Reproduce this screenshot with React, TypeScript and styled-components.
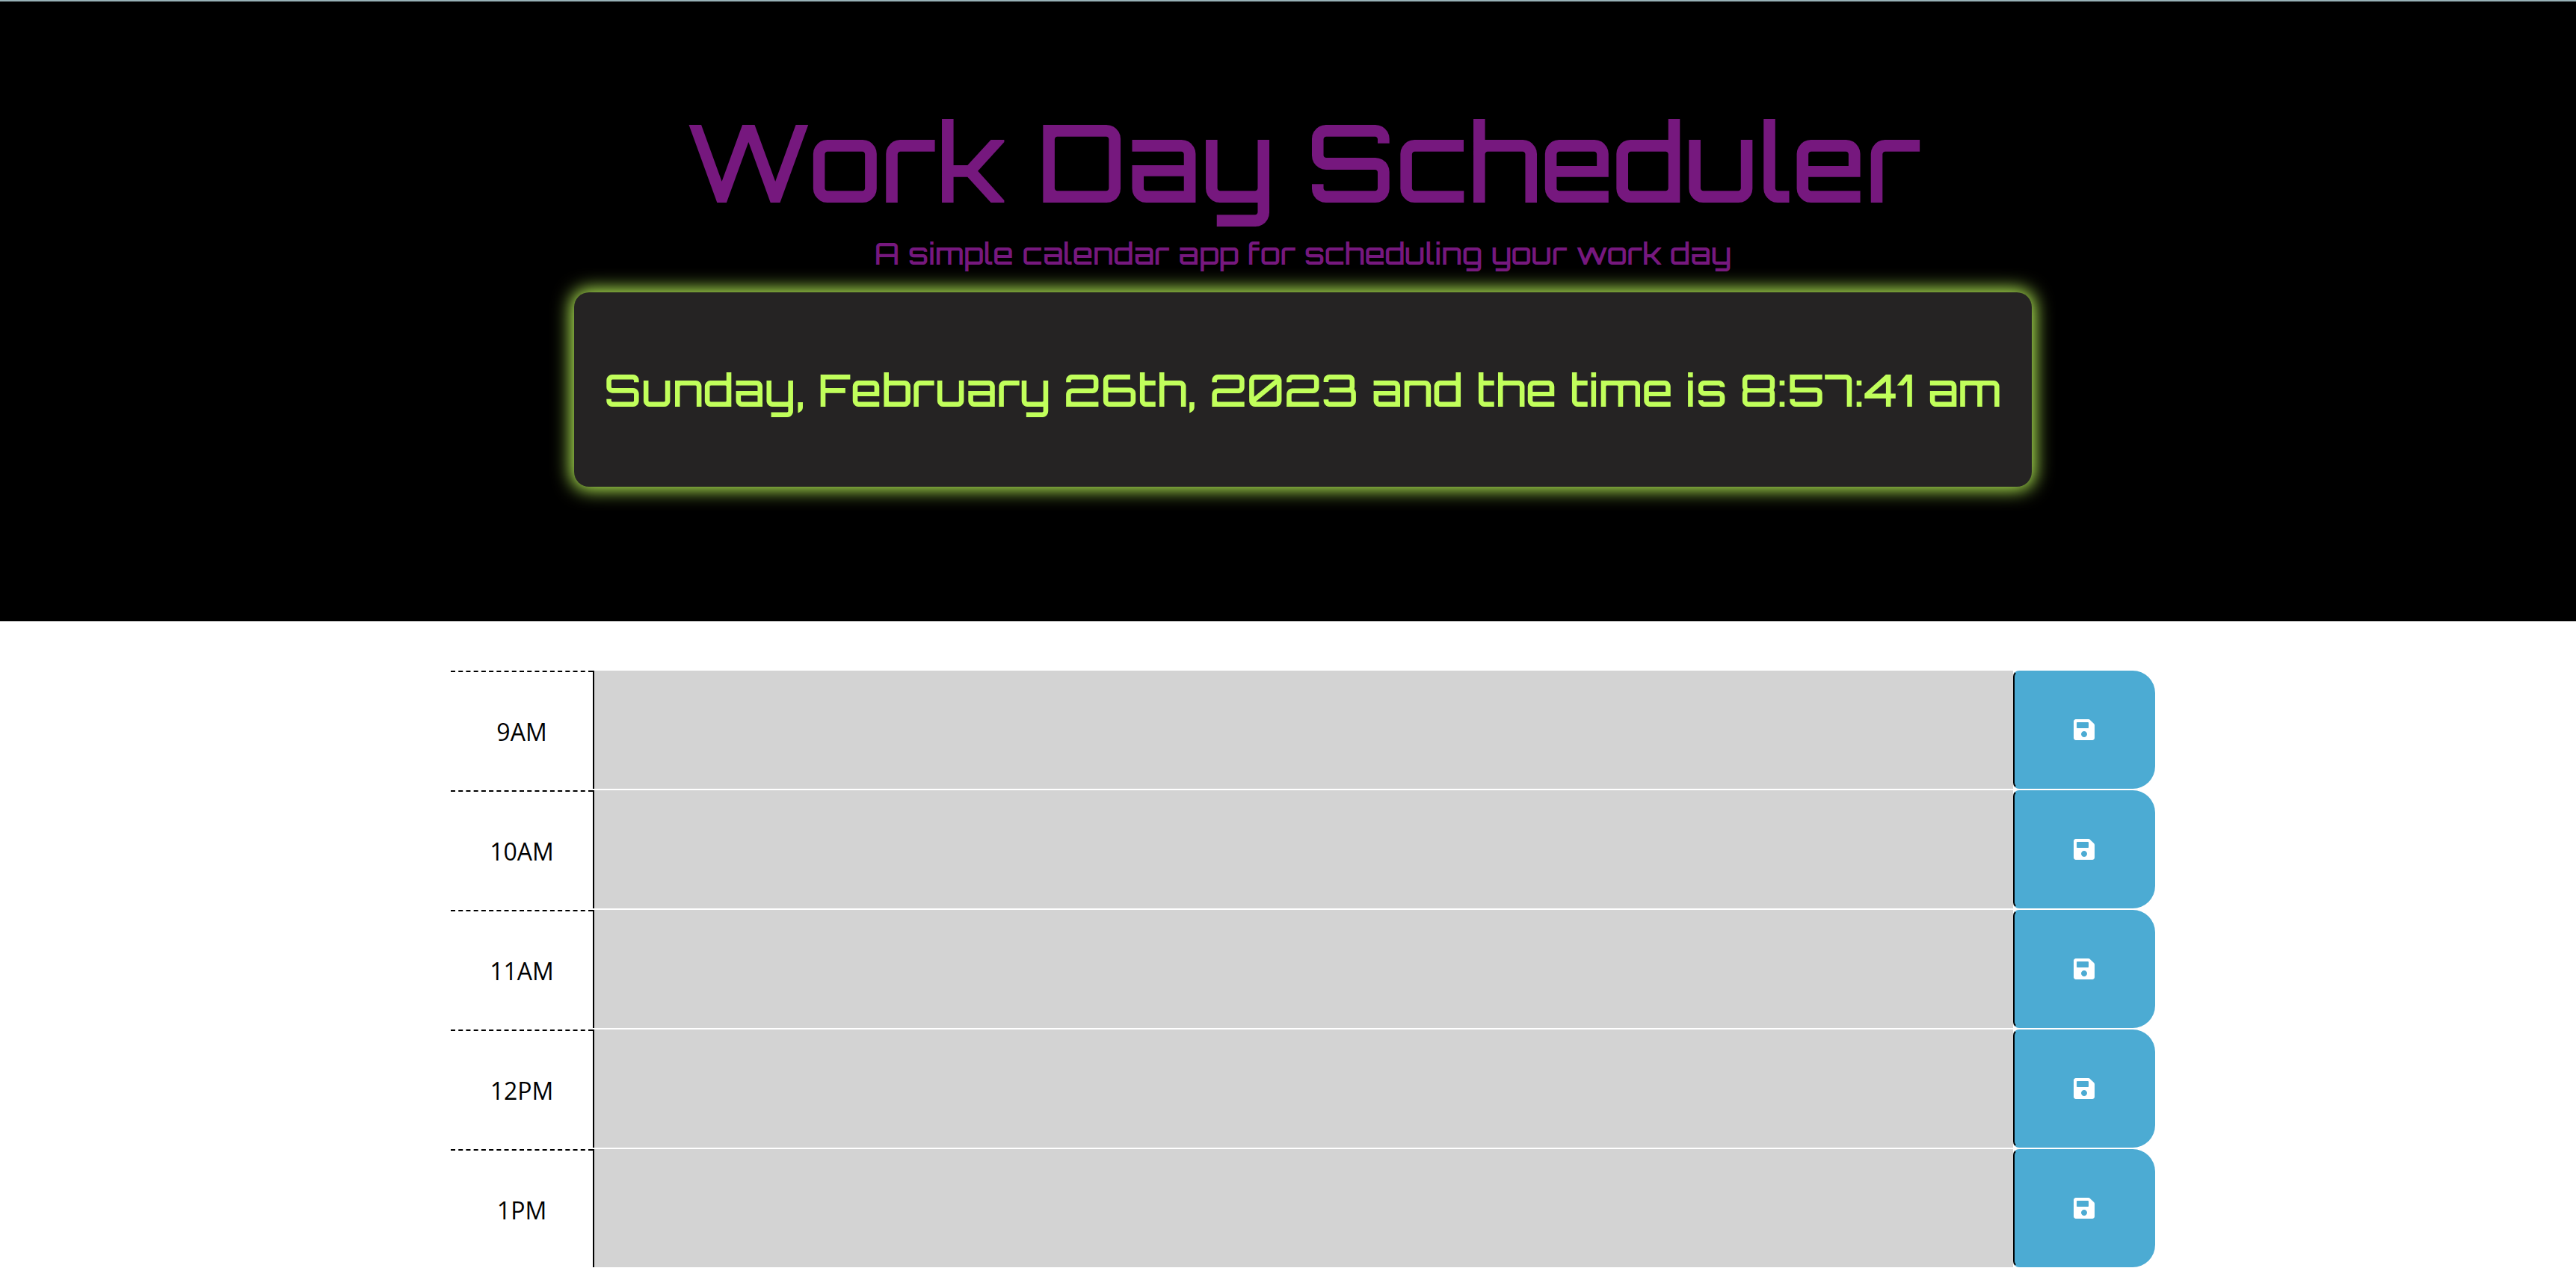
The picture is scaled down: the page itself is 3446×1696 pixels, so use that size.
import React from "react";
import styled, { createGlobalStyle } from "styled-components";
import { FaSave } from "react-icons/fa";

const GlobalStyle = createGlobalStyle`
  *, *::before, *::after { box-sizing: border-box; }
  body {
    margin: 0;
    background: #fff;
    color: #000;
    font-family: "Open Sans", "Noto Sans", sans-serif;
    font-size: 32px;
    line-height: 48px;
  }
`;

const Header = styled.header`
  display: flex;
  flex-direction: column;
  align-items: center;
  padding: 129px 0 180px 40px;
  border-top: 2px solid #97b1b7;
  background: #000;
  color: #76187e;
  font-family: Orbitron, "DejaVu Sans", sans-serif;
  font-weight: 500;
  text-align: center;
  white-space: nowrap;
`;

const Title = styled.h1`
  margin: 0;
  font-size: 144px;
  font-weight: 500;
  line-height: 170px;
`;

const Lead = styled.p`
  margin: 0 0 14px;
  font-size: 40px;
  line-height: 76px;
`;

const Clock = styled.p`
  display: flex;
  align-items: center;
  justify-content: center;
  margin: 0;
  height: 260px;
  padding: 0 40px;
  border-radius: 20px;
  background: #252323;
  box-shadow: 0 0 24px 4px #c1ff5b;
  color: #c1ff5b;
  font-size: 60px;
`;

const Schedule = styled.main`
  padding: 66px 0 0 40px;
`;

const Blocks = styled.div`
  width: 100%;
  max-width: 2280px;
  margin: 0 auto;
`;

const TimeBlock = styled.div`
  display: grid;
  grid-template-columns: 1fr 10fr 1fr;
  height: 160px;
  border-bottom: 2px solid #fff;
`;

const Hour = styled.label`
  padding-top: 56px;
  border-top: 2px dashed #000;
  text-align: center;
`;

const Description = styled.textarea`
  width: 100%;
  height: 100%;
  padding: 4px;
  border: 0;
  border-left: 2px solid #000;
  outline: none;
  resize: none;
  background: #d3d3d3;
  color: #000;
  font: inherit;
`;

const SaveButton = styled.button`
  display: flex;
  align-items: center;
  justify-content: center;
  padding: 0;
  border: 2px solid #4cabd3;
  border-left-color: #000;
  border-radius: 8px 30px 30px 8px;
  background: #4cabd3;
  color: #fff;
  font-size: 32px;
  cursor: pointer;
`;

const hours = ["9AM", "10AM", "11AM", "12PM", "1PM"];

export default function App() {
  return (
    <>
      <GlobalStyle />
      <Header>
        <Title>Work Day Scheduler</Title>
        <Lead>A simple calendar app for scheduling your work day</Lead>
        <Clock>Sunday, February 26th, 2023 and the time is 8:57:41 am</Clock>
      </Header>
      <Schedule>
        <Blocks>
          {hours.map((hour) => (
            <TimeBlock key={hour}>
              <Hour htmlFor={`hour-${hour}`}>{hour}</Hour>
              <Description id={`hour-${hour}`} />
              <SaveButton type="button" aria-label={`Save ${hour}`}>
                <FaSave aria-hidden="true" />
              </SaveButton>
            </TimeBlock>
          ))}
        </Blocks>
      </Schedule>
    </>
  );
}
